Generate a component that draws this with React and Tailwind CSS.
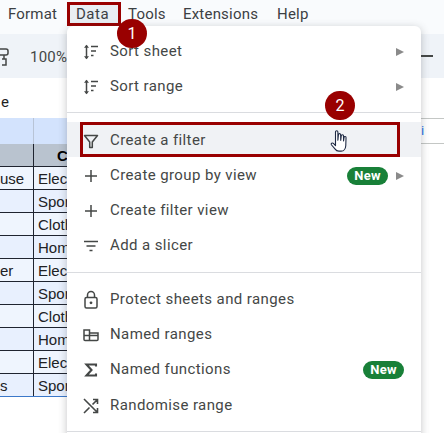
const Icon = ({ children }) => (
  <svg width="20" height="20" viewBox="0 0 20 20" fill="none" stroke="#444746" strokeWidth="1.5" className="shrink-0">{children}</svg>
);

const Sort = () => (
  <Icon>
    <path d="M5.5 3.5v13" />
    <path d="M3 5.8l2.5-3 2.5 3zM3 14.2l2.5 3 2.5-3z" fill="#444746" stroke="none" />
    <path d="M10 4.500h7M10 9h5M10 13.500h2.500" strokeWidth="1.300" />
  </Icon>
);
const Plus = () => (
  <Icon>
    <path d="M4 10h12M10 4v12" />
  </Icon>
);
const Filter = () => (
  <Icon>
    <path d="M3.5 4.500h13L11.300 11v5.500H8.700V11z" strokeLinejoin="round" />
  </Icon>
);
const Slicer = () => (
  <Icon>
    <path d="M3 5.500h14M5.500 10h9M8.500 14.500h3" />
  </Icon>
);
const Lock = () => (
  <Icon>
    <rect x="4" y="7.500" width="12" height="10.500" rx="1.500" />
    <path d="M6.500 7.500V5a3.500 3.500 0 0 1 7 0v2.500" />
    <circle cx="10" cy="12.800" r="1.400" fill="#444746" stroke="none" />
  </Icon>
);
const Named = () => (
  <Icon>
    <path d="M3 5h5.500v10.500H4a1 1 0 0 1-1-1zM8.500 8H17v6.500a1 1 0 0 1-1 1H8.500M3 10.500h14" />
  </Icon>
);
const Sigma = () => (
  <Icon>
    <path d="M15 6.500V4.500H5.500L10.500 10l-5 5.500H15v-2" strokeWidth="2.100" />
  </Icon>
);
const Shuffle = () => (
  <Icon>
    <path d="M3 3l13.500 13.500M3 17l5.500-5.500M11.500 8.500l5-5M12 3.500h4.500V8M16.500 12v4.500H12" strokeWidth="1.600" />
  </Icon>
);

const Arrow = () => <span className="w-0 h-0 border-y-[4px] border-y-transparent border-l-[8px] border-l-[#8a8a8a]" />;
const New = () => (
  <span className="h-[18px] w-[41px] rounded-full bg-[#188038] text-white text-[13px] font-bold flex items-center justify-center tracking-[0.2px]">New</span>
);

const Item = ({ icon, label, right, low, hover }) => (
  <div className={`flex items-center h-[35px] pl-[14px] pr-[17px] text-[15px] tracking-[0.4px] text-[#444746] ${low ? "pt-[2px]" : ""} ${hover ? "bg-[#f0f2f5]" : ""}`}>
    {icon}
    <span className="ml-[9px] flex-1 whitespace-nowrap">{label}</span>
    <div className="flex items-center gap-[8px]">{right}</div>
  </div>
);

const Divider = ({ className }) => <div className={`h-px bg-[#dadce0] ${className}`} />;

const rows = [
  { left: "use", pad: "pr-[16px]", text: "Electronics" },
  { left: "", pad: "", text: "Sports" },
  { left: "", pad: "", text: "Clothing" },
  { left: "", pad: "", text: "Home" },
  { left: "er", pad: "pr-[27px]", text: "Electronics" },
  { left: "", pad: "", text: "Sports" },
  { left: "", pad: "", text: "Clothing" },
  { left: "", pad: "", text: "Home" },
  { left: "", pad: "", text: "Electronics" },
  { left: "s", pad: "pr-[26px]", text: "Sports" },
];

export default function App() {
  return (
    <div className="relative w-[444px] h-[433px] overflow-hidden bg-white font-['Roboto',sans-serif]">
      <div className="h-[34px] bg-[#f9fbfd] flex items-start pl-[8px] pt-[3px] text-[15px] leading-[22px] tracking-[0.2px] text-[#3c4043]">
        <span className="w-[59px]">Format</span>
        <span className="w-[54px] h-[24px] mt-[-1px] border-[3px] border-[#990000] bg-[#e9eef3] pl-[6px] leading-[19px] tracking-[0.5px]">Data</span>
        <span className="w-[55px] ml-[7px]">Tools</span>
        <span className="w-[94px]">Extensions</span>
        <span>Help</span>
      </div>
      <div className="h-[44px] bg-[#eff3f8] flex items-center text-[15px] tracking-[0.2px] text-[#444746]">
        <svg width="10" height="20" viewBox="0 0 10 20" fill="none" stroke="#444746" strokeWidth="1.500">
          <path d="M0 3h6a2 2 0 0 1 2 2v2a2 2 0 0 1-2 2H0M4 9v4M2 13h4v6H2" />
        </svg>
        <span className="ml-[20px] pt-[2px]">100%</span>
        <span className="ml-auto mr-[11px] w-[12px] h-[2px] bg-[#444746]" />
      </div>
      <div className="h-[40px] bg-white flex items-center pt-[8px] text-[15px] text-[#1f1f1f]">
        <span className="ml-[1px]">e</span>
      </div>
      <div className="h-[26px] flex">
        <div className="w-[400px] bg-[#d3e3fd] flex">
          <div className="w-[34px] border-r border-[#b8c4d6]" />
        </div>
        <div className="flex-1 border-y border-[#c4c7c5] pl-[21px] text-[13px] leading-[24px] text-[#1a73e8]">i</div>
      </div>
      <div className="w-[400px] font-['Liberation_Sans',sans-serif]">
        <div className="h-[23px] flex bg-[#b9c3cf] border-b border-[#1f2430]">
          <div className="w-[34px] border-r border-[#1f2430]" />
          <div className="flex-1 pl-[23px] text-[15px] font-bold text-black leading-[23px]">C</div>
        </div>
        {rows.map((r, i) => (
          <div key={i} className={`h-[23px] flex text-[15px] leading-[24px] text-[#202124] border-b ${i === 9 ? "border-[#3b78c9]" : "border-[#1f2430]"} ${i % 2 ? "bg-[#e8f0fe]" : "bg-[#eff5fe]"}`}>
            <div className={`w-[34px] border-r border-[#1f2430] text-right overflow-hidden ${r.pad}`}>{r.left}</div>
            <div className="flex-1 pl-[4px]">{r.text}</div>
          </div>
        ))}
      </div>

      <div className="absolute left-[67px] top-[26px] w-[354px] h-[420px] bg-white rounded-t-[6px] shadow-[0_2px_8px_rgba(60,64,67,0.3)] pt-[8px] flex flex-col">
        <Item icon={<Sort />} label="Sort sheet" right={<Arrow />} />
        <Item icon={<Sort />} label="Sort range" right={<Arrow />} />
        <Divider className="mt-[8px] mb-[9px]" />
        <Item low hover icon={<Filter />} label="Create a filter" />
        <Item low icon={<Plus />} label="Create group by view" right={<><New /><Arrow /></>} />
        <Item low icon={<Plus />} label="Create filter view" />
        <Item low icon={<Slicer />} label="Add a slicer" />
        <Divider className="mt-[10px] mb-[9px]" />
        <Item icon={<Lock />} label="Protect sheets and ranges" />
        <Item icon={<Named />} label="Named ranges" />
        <Item icon={<Sigma />} label="Named functions" right={<New />} />
        <Item low icon={<Shuffle />} label="Randomise range" />
        <Divider className="mt-[9px]" />
      </div>

      <div className="absolute left-[80px] top-[122px] w-[320px] h-[35px] border-[3px] border-[#990000]" />
      <div className="absolute left-[117px] top-[19px] w-[30px] h-[29px] rounded-full bg-[#990000] text-white text-[16px] flex items-center justify-center">1</div>
      <div className="absolute left-[325px] top-[91px] w-[30px] h-[29px] rounded-full bg-[#990000] text-white text-[16px] flex items-center justify-center">2</div>
      <svg className="absolute left-[330px] top-[129px]" width="22" height="26" viewBox="0 0 24 28" fill="#fff" stroke="#1f2a44" strokeWidth="1.200" strokeLinejoin="round">
        <path d="M6 3a1.300 1.300 0 0 1 2.600 0v9l.6-6a1.200 1.200 0 0 1 2.400.2l.1 6 .6-5a1.200 1.200 0 0 1 2.400.2l.1 5.400.5-3.800a1.100 1.100 0 0 1 2.200.2l-.3 8.800c-.2 3-2 6-5 6h-2.500c-2 0-3.300-1-4.300-2.500L1.500 17c-.8-1.300 1-2.600 2.200-1.500L6 18z" />
      </svg>
    </div>
  );
}
